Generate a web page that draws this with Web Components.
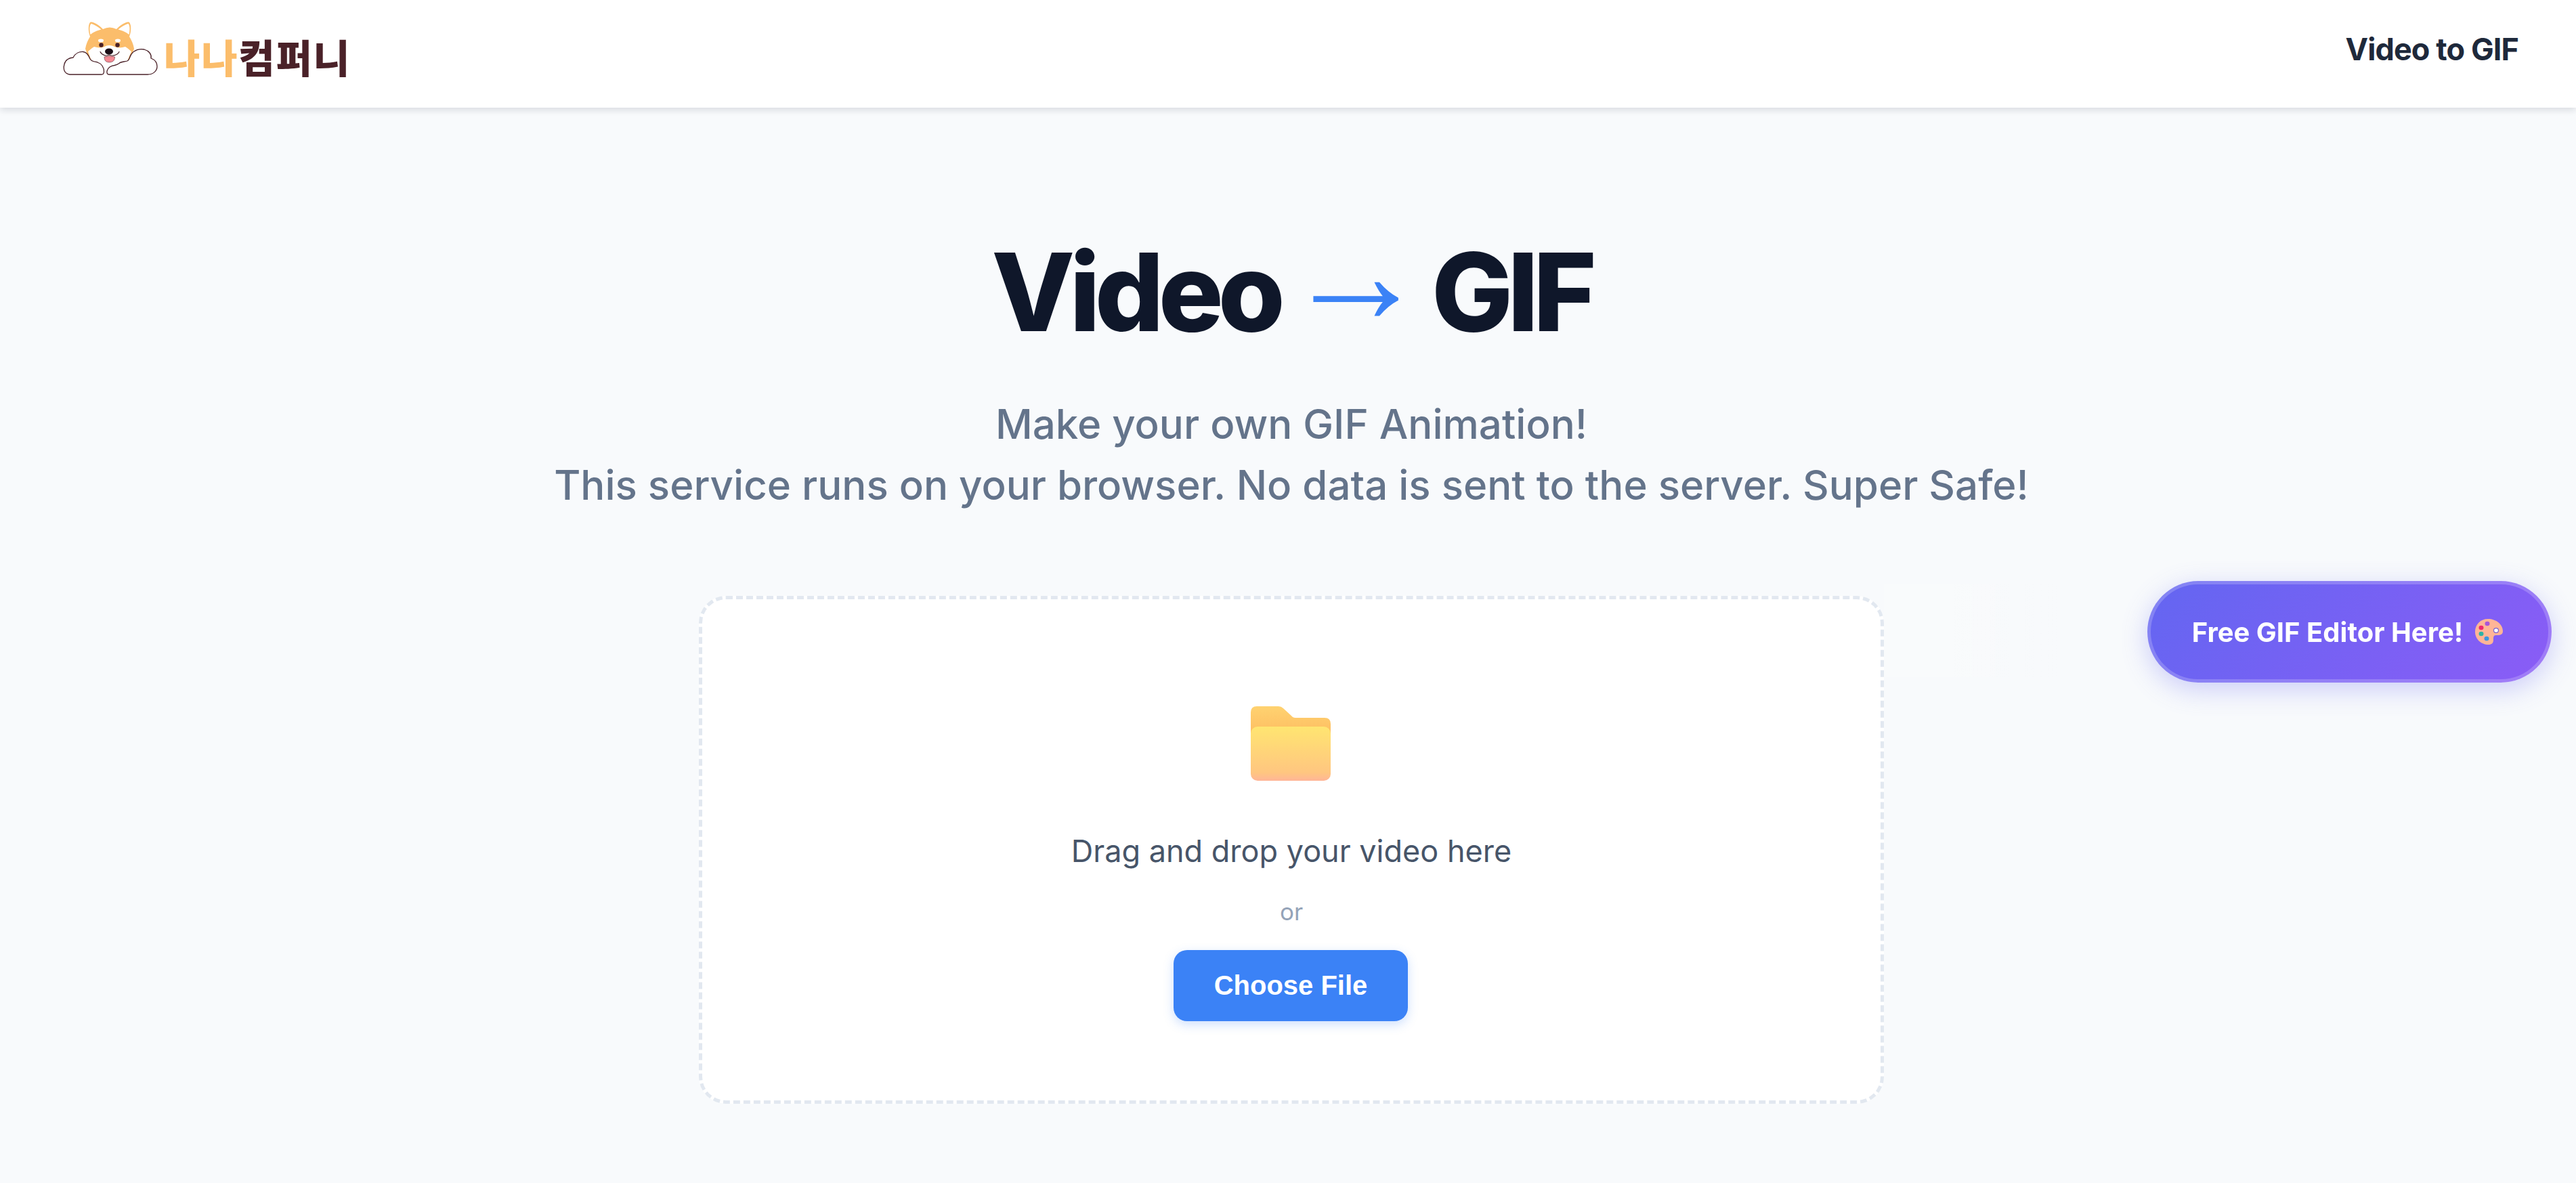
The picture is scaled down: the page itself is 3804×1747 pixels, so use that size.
<!doctype html>
<html>
<head>
<meta charset="utf-8">
<style>
  html, body { margin: 0; height: 100%; }
  body { background: #f8fafc; font-family: Inter, "Noto Sans", sans-serif; color: #0f172a; overflow: hidden; }
  main { display: block; padding-left: 10px; }
</style>
</head>
<body>
<site-header></site-header>
<main>
  <hero-title></hero-title>
  <drop-zone></drop-zone>
</main>
<editor-button>Free GIF Editor Here!</editor-button>

<script>
// Shiba + clouds, coordinates taken from the logo crop (170x110)
const LOGO_SVG = `
<svg xmlns="http://www.w3.org/2000/svg" width="170" height="110" viewBox="0 0 170 110">
  <path d="M46 53 C47 46 50 40 53 35 C50 27 50 18 53 14 C57 12 66 18 72 24 Q82 19 92 24 C98 18 107 12 111 14 C114 18 114 27 111 35 C114 40 117 46 118 53 L112 70 H52 Z" fill="#fbbd6b"/>
  <path d="M53.500 32 C52 25 52 19 54.500 16 C59 17 65 21 69.500 24.500 C63 26 57 29 53.500 32 Z" fill="#fff"/>
  <path d="M110.500 32 C112 25 112 19 109.500 16 C105 17 99 21 94.500 24.500 C101 26 107 29 110.500 32 Z" fill="#fff"/>
  <path d="M50 57 C53 55 55 52 59 50 C65 52 72 52 76 49 Q81 47 87 49 C92 52 99 52 105 50 C109 52 111 55 114 57 L100 90 H62 Z" fill="#fff"/>
  <ellipse cx="69" cy="41" rx="4" ry="2.400" fill="#fff"/>
  <ellipse cx="94" cy="41" rx="4" ry="2.400" fill="#fff"/>
  <circle cx="69.500" cy="47.500" r="3.200" fill="#4a2128"/>
  <circle cx="93.500" cy="47.500" r="3.200" fill="#4a2128"/>
  <path d="M68 57.500 C71 63 77 64 81 62 C86 64 93 63 96 57.500" fill="none" stroke="#4a2128" stroke-width="1.200" stroke-linecap="round"/>
  <path d="M74 65 Q81 62.500 89.500 65 C89.500 71 86 73 81.500 73 C77 73 74 71 74 65 Z" fill="#f48a94" stroke="#4a2128" stroke-width=".5"/>
  <ellipse cx="81" cy="57" rx="6" ry="4.500" fill="#1c0e17"/>
  <path d="M23 91 C15 90 13 83 15 76 C16 70 22 66 28 66 C31 60 37 57 43 57.500 C48 58 51 63 53 68 C55 72 60 72 64 73 C70 75 74 81 73.500 87 C73.300 90 72 91 70 91 Z" fill="#fff" stroke="#4a2128" stroke-width="1.300"/>
  <path d="M81 91 C78.500 91 77.500 89 78 86 C79 81 84 78 89 77.500 C92 77 94 76 96 74.500 C99 71.500 104 72.500 108 71 C112 69 111 65 114 61 C118 55 126 52.500 133 54 C140 56 144 61 143 67 C148 69 152 73 152 79 C152 86 146 91 138 91 Z" fill="#fff" stroke="#4a2128" stroke-width="1.300"/>
</svg>`;

class SiteHeader extends HTMLElement {
  constructor() {
    super();
    this.attachShadow({ mode: 'open' });
    this.shadowRoot.innerHTML = `
      <style>
        :host { display: flex; align-items: center; justify-content: space-between; box-sizing: border-box; height: 159px; padding: 0 85px 0 80px; background: #fff; box-shadow: 0 2.500px 10px rgba(15,23,42,.14); position: relative; }
        .brand { display: flex; align-items: center; }
        .brand svg { display: block; margin-top: -11px; }
        .word { font: 900 58px/1 "Noto Sans CJK KR", sans-serif; letter-spacing: 1.800px; margin: 7px 0 0 -8px; }
        .a { color: #fbbd6b; }
        .b { color: #4a2128; }
        .link { font-size: 45px; font-weight: 700; letter-spacing: -.9px; color: #1e293b; margin-top: -14px; }
      </style>
      <div class="brand">${LOGO_SVG}<span class="word"><span class="a">나나</span><span class="b">컴퍼니</span></span></div>
      <div class="link">Video to GIF</div>`;
  }
}

class HeroTitle extends HTMLElement {
  constructor() {
    super();
    this.attachShadow({ mode: 'open' });
    this.shadowRoot.innerHTML = `
      <style>
        :host { display: flex; flex-direction: column; align-items: center; padding-top: 176px; }
        h1 { margin: 0; font-size: 160px; line-height: 192px; font-weight: 800; letter-spacing: -8px; color: #0f172a; white-space: nowrap; }
        /* the glyph comes out too small at heading size, so it is scaled up in place */
        h1 span { display: inline-block; color: #3b82f6; font-family: "Noto Sans", sans-serif; font-size: 160px; line-height: 160px; font-weight: 400; letter-spacing: 0; margin: 0 5px; transform: translateY(-32px) scale(1.325); }
        p { margin: 54px 0 0; font-size: 60px; line-height: 1.5; font-weight: 500; color: #64748b; text-align: center; }
      </style>
      <h1>Video <span>→</span> GIF</h1>
      <p>Make your own GIF Animation!<br>This service runs on your browser. No data is sent to the server. Super Safe!</p>`;
  }
}

class DropZone extends HTMLElement {
  constructor() {
    super();
    this.attachShadow({ mode: 'open' });
    this.shadowRoot.innerHTML = `
      <style>
        :host { display: flex; flex-direction: column; align-items: center; box-sizing: border-box; width: 1750px; height: 750px; margin: 119px auto 0; padding-top: 158px; background: #fff; border: 5px dashed #e2e8f0; border-radius: 40px; }
        svg { display: block; margin-left: -2px; }
        .main { margin-top: 70px; font-size: 45px; line-height: 1.5; color: #475569; }
        .or { margin-top: 29px; font-size: 35px; line-height: 1.5; color: #94a3b8; }
        button { margin: 31px 0 0 -2px; width: 346px; height: 105px; border: 0; border-radius: 20px; background: #3b82f6; color: #fff; font: 700 40px "Liberation Sans", Arial, sans-serif; box-shadow: 0 5px 15px rgba(59,130,246,.25); }
      </style>
      <svg xmlns="http://www.w3.org/2000/svg" width="118" height="110" viewBox="0 0 118 110">
        <defs>
          <linearGradient id="back" x1="0" y1="0" x2="0" y2="1"><stop offset="0" stop-color="#ffd270"/><stop offset="1" stop-color="#fdb95f"/></linearGradient>
          <linearGradient id="front" x1="0" y1="0" x2="0" y2="1"><stop offset="0" stop-color="#ffe571"/><stop offset=".85" stop-color="#ffc680"/><stop offset="1" stop-color="#ffb597"/></linearGradient>
        </defs>
        <path d="M0 9 Q0 0 9 0 H41 Q45 0 48 3 L60 14 Q62 17 66 17 H109 Q118 17 118 26 V50 H0 Z" fill="url(#back)"/>
        <rect x="0" y="30" width="118" height="80" rx="10" fill="url(#front)"/>
      </svg>
      <div class="main">Drag and drop your video here</div>
      <div class="or">or</div>
      <button>Choose File</button>`;
  }
}

class EditorButton extends HTMLElement {
  constructor() {
    super();
    this.attachShadow({ mode: 'open' });
    this.shadowRoot.innerHTML = `
      <style>
        :host { position: fixed; left: 3171px; top: 858px; display: flex; align-items: center; justify-content: center; gap: 18px; box-sizing: border-box; width: 597px; height: 150px; padding-right: 6px; border: 5px solid rgba(255,255,255,.2); border-radius: 75px; background: linear-gradient(135deg, #6366f1, #8b5cf6) border-box; color: #fff; font-size: 40px; font-weight: 700; box-shadow: 0 10px 38px rgba(99,102,241,.3); }
        :host::before { content: ""; position: absolute; left: -394px; top: 0; width: 260px; height: 137px; background: linear-gradient(90deg, rgba(255,255,255,.2) 40%, rgba(255,255,255,0)); }
        svg { display: block; }
      </style>
      <slot></slot>
      <svg xmlns="http://www.w3.org/2000/svg" width="41" height="38" viewBox="0 0 41 38">
        <path d="M19 0 C31 0 41 8 41 18 C41 24 36 24 31 24 C27 24 27 27 27 31 C27 36 24 38 20 38 C9 38 0 30 0 19 C0 8 8 0 19 0 Z" fill="#ffb597"/>
        <ellipse cx="18" cy="7" rx="3.500" ry="3.300" fill="#a855d8"/>
        <ellipse cx="9" cy="13" rx="3.500" ry="3.300" fill="#ef2a6e"/>
        <ellipse cx="9" cy="22" rx="3.500" ry="3.300" fill="#2fb3a6"/>
        <ellipse cx="17" cy="29" rx="3.500" ry="3.300" fill="#3f96de"/>
        <ellipse cx="31" cy="17" rx="3.500" ry="3.300" fill="#fff" stroke="#7a5fd0" stroke-width="1.200"/>
      </svg>`;
  }
}

customElements.define('site-header', SiteHeader);
customElements.define('hero-title', HeroTitle);
customElements.define('drop-zone', DropZone);
customElements.define('editor-button', EditorButton);
</script>
</body>
</html>
